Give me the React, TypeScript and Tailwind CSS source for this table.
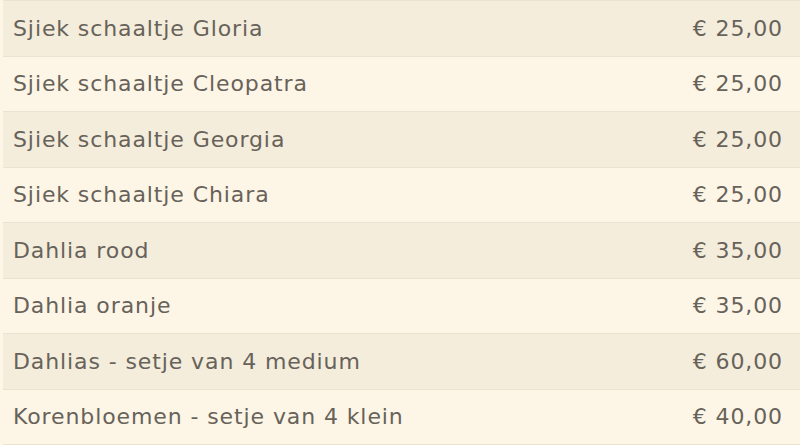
const items = [
  { name: "Sjiek schaaltje Gloria", price: "€ 25,00" },
  { name: "Sjiek schaaltje Cleopatra", price: "€ 25,00" },
  { name: "Sjiek schaaltje Georgia", price: "€ 25,00" },
  { name: "Sjiek schaaltje Chiara", price: "€ 25,00" },
  { name: "Dahlia rood", price: "€ 35,00" },
  { name: "Dahlia oranje", price: "€ 35,00" },
  { name: "Dahlias - setje van 4 medium", price: "€ 60,00" },
  { name: "Korenbloemen - setje van 4 klein", price: "€ 40,00" },
];

export default function App() {
  return (
    <div className="w-[800px] h-[445px] overflow-hidden bg-[#fdf6e6] pl-[3px] font-['DejaVu_Sans',Verdana,sans-serif] text-[#67625a]">
      <div className="flex flex-col">
        {items.map((item, i) => (
          <div
            key={item.name}
            className={
              "flex h-[55.5px] shrink-0 items-center justify-between border-t border-[#ebe3d1] pl-[10px] pr-[17px] text-[22px] tracking-[0.9px] " +
              (i % 2 === 0 ? "bg-[#f4eddc]" : "bg-[#fdf6e6]")
            }
          >
            <span>{item.name}</span>
            <span>{item.price}</span>
          </div>
        ))}
        <div className="border-t border-[#ebe3d1]" />
      </div>
    </div>
  );
}
